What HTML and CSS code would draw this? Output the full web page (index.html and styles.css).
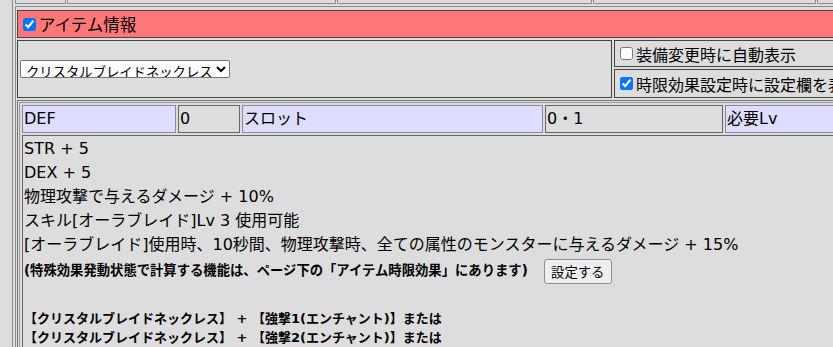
FILE: index.html
```html
<!DOCTYPE html>
<html lang="ja">
<head>
  <meta charset="UTF-8" />
  <title>アイテム情報</title>
  <link rel="stylesheet" href="styles.css">
</head>
<body>

  <div class="page">
    <!-- bottom edge of the row above -->
    <div class="prev-row">
      <div class="prev-cell"></div>
      <div class="prev-cell"></div>
      <div class="prev-cell"></div>
      <div class="prev-cell"></div>
      <div class="prev-cell"></div>
    </div>

    <div class="item-frame">
      <div class="item-head">
        <label><input type="checkbox" checked>アイテム情報</label>
      </div>

      <div class="item-select-row">
        <div class="select-cell">
          <select class="item-select">
            <option>クリスタルブレイドネックレス</option>
          </select>
        </div>
        <div class="option-col">
          <label class="option-box opt-auto"><input type="checkbox">装備変更時に自動表示</label>
          <label class="option-box opt-limit"><input type="checkbox" checked>時限効果設定時に設定欄を表示</label>
        </div>
      </div>

      <div class="detail-cell">
        <div class="detail-table">
          <div class="stat-row">
            <div class="stat-head w-def">DEF</div>
            <div class="stat-val w-defval">0</div>
            <div class="stat-head w-slot">スロット</div>
            <div class="stat-val w-slotval">0・1</div>
            <div class="stat-head w-lv">必要Lv</div>
          </div>
          <div class="effect-cell">
            STR + 5<br>
            DEX + 5<br>
            物理攻撃で与えるダメージ + 10%<br>
            スキル[オーラブレイド]Lv 3 使用可能<br>
            [オーラブレイド]使用時、10秒間、物理攻撃時、全ての属性のモンスターに与えるダメージ + 15%
            <div class="note">
              <b>(特殊効果発動状態で計算する機能は、ページ下の「アイテム時限効果」にあります)</b>
              <button class="set-btn">設定する</button>
            </div>
            <div class="spacer"></div>
            <div class="combo">
              【クリスタルブレイドネックレス】 + 【強撃1(エンチャント)】または<br>
              【クリスタルブレイドネックレス】 + 【強撃2(エンチャント)】または
            </div>
          </div>
        </div>
      </div>
    </div>
  </div>

</body>
</html>
```

FILE: styles.css
```css
html,
body {
  overflow: hidden;
}

body {
  margin: 0;
  background-color: #dddddd;
  font-family: "DejaVu Sans", "Noto Sans CJK JP", sans-serif;
  font-size: 16px;
  color: #000;
}

.page {
  margin-left: 12px;
  border-left: 1px solid #8c8c8c;
  padding-left: 2px;
  width: 1200px;
  height: 347px;
}

/* row above, only its bottom edge is visible */
.prev-row {
  display: grid;
  grid-template-columns: 51px 269px 255px 223px 1fr;
  column-gap: 1px;
  height: 4px;
}

.prev-cell {
  border: 1px solid #8c8c8c;
  border-top: none;
}

.item-frame {
  margin-top: 2px;
  border: 1px solid #8c8c8c;
  padding: 3px 0 0 1px;
  height: 400px;
}

.item-head {
  display: flex;
  align-items: center;
  height: 28px;
  box-sizing: border-box;
  padding: 0 1px;
  border: 1px solid #444;
  background-color: #ff7777;
  font-size: 16.5px;
}

.item-head label,
.option-box {
  display: flex;
  align-items: center;
}

input[type="checkbox"] {
  width: 13px;
  height: 13px;
  margin: 3px 3px 3px 4px;
}

.item-select-row {
  display: flex;
  gap: 2px;
  margin-top: 2px;
}

.select-cell {
  display: flex;
  align-items: center;
  width: 595px;
  height: 58px;
  box-sizing: border-box;
  padding: 0 1px;
  border: 1px solid #444;
}

.item-select {
  margin-left: 1px;
  width: 210px;
  height: 18px;
  font-family: "Noto Sans CJK JP", sans-serif;
  font-size: 13.33px;
  padding: 0 0 0 1px;
}

.option-col {
  display: flex;
  flex-direction: column;
  gap: 2px;
  width: 400px;
}

.option-box {
  box-sizing: border-box;
  padding: 0 1px;
  border: 1px solid #444;
  white-space: nowrap;
}

.opt-auto {
  height: 27px;
}

.opt-limit {
  height: 29px;
}

.detail-cell {
  margin-top: 2px;
  border: 1px solid #777;
  padding: 1px;
}

.detail-table {
  border: 1px solid #999;
  padding: 2px;
}

.stat-row {
  display: flex;
  gap: 2px;
}

.stat-head,
.stat-val {
  height: 28px;
  box-sizing: border-box;
  padding: 0 1px;
  line-height: 26px;
  white-space: nowrap;
}

.stat-head {
  background-color: #ddddff;
  border: 1px solid #8a8a9a;
}

.stat-val {
  border: 1px solid #666;
}

.w-def { width: 154px; }
.w-defval { width: 62px; }
.w-slot { width: 301px; }
.w-slotval { width: 178px; }
.w-lv { width: 200px; }

.effect-cell {
  margin-top: 2px;
  border: 1px solid #666;
  padding: 1px;
  line-height: 24px;
  height: 300px;
  white-space: nowrap;
}

.note {
  display: flex;
  align-items: center;
  height: 28px;
  font-size: 13.33px;
}

.set-btn {
  margin-left: 16px;
  width: 68px;
  height: 25px;
  padding: 0;
  font-family: "Noto Sans CJK JP", sans-serif;
  font-size: 13.33px;
  background-color: #efefef;
  border: 1px solid #8f8f8f;
  border-radius: 3px;
}

.spacer {
  height: 24px;
}

.combo {
  font-size: 13px;
  font-weight: bold;
  line-height: 19px;
}
```
